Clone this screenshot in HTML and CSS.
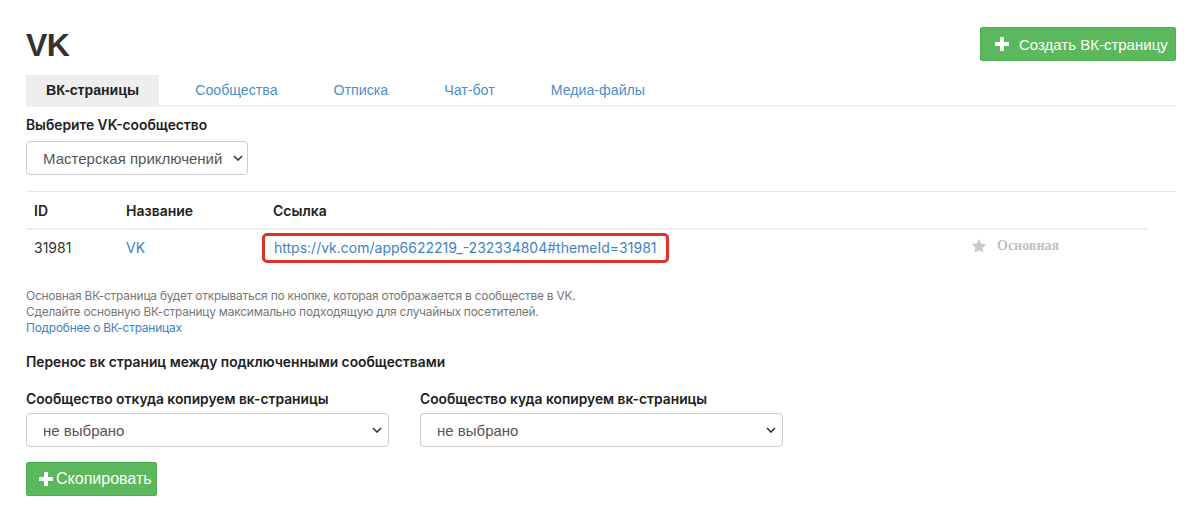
FILE: index.html
```html
<!DOCTYPE html>
<html lang="ru">
<head>
<meta charset="utf-8">
<title>VK</title>
<link rel="stylesheet" href="styles.css">
</head>
<body>
<div class="page">
  <div class="header">
    <h1 class="title">VK</h1>
    <button class="btn btn-green btn-create"><svg class="plus" viewBox="0 0 14 14" width="14" height="14"><path d="M5 0h4v5h5v4H9v5H5V9H0V5h5z" fill="#fff"/></svg>Создать ВК-страницу</button>
  </div>
  <ul class="tabs">
    <li class="tab active">ВК-страницы</li>
    <li class="tab">Сообщества</li>
    <li class="tab">Отписка</li>
    <li class="tab">Чат-бот</li>
    <li class="tab">Медиа-файлы</li>
  </ul>
  <div class="label first-label">Выберите VK-сообщество</div>
  <div class="select small-select"><span>Мастерская приключений</span><svg class="chev" viewBox="0 0 10 6" width="10" height="6"><path d="M1 1l4 4 4-4" fill="none" stroke="#333" stroke-width="1.6"/></svg></div>
  <div class="divider"></div>
  <table class="tbl">
    <thead>
      <tr><th class="c-id">ID</th><th class="c-name">Название</th><th class="c-link">Ссылка</th><th></th></tr>
    </thead>
    <tbody>
      <tr>
        <td>31981</td>
        <td><a class="blue">VK</a></td>
        <td><span class="hl"><a class="blue">https://vk.com/app6622219_-232334804#themeId=31981</a></span></td>
        <td class="c-main"><span class="main"><svg class="star" viewBox="0 0 24 24" width="16" height="16"><path d="M12 1.5l3.2 6.9 7.5.9-5.5 5.2 1.4 7.4L12 18.2l-6.6 3.7 1.4-7.4L1.3 9.3l7.5-.9z" fill="#c8c8c8"/></svg>Основная</span></td>
      </tr>
    </tbody>
  </table>
  <div class="notes">
    <div>Основная ВК-страница будет открываться по кнопке, которая отображается в сообществе в VK.</div>
    <div>Сделайте основную ВК-страницу максимально подходящую для случайных посетителей.</div>
    <div><a class="blue">Подробнее о ВК-страницах</a></div>
  </div>
  <div class="label transfer">Перенос вк страниц между подключенными сообществами</div>
  <div class="row">
    <div class="col">
      <div class="label">Сообщество откуда копируем вк-страницы</div>
      <div class="select"><span>не выбрано</span><svg class="chev" viewBox="0 0 10 6" width="10" height="6"><path d="M1 1l4 4 4-4" fill="none" stroke="#333" stroke-width="1.6"/></svg></div>
    </div>
    <div class="col">
      <div class="label">Сообщество куда копируем вк-страницы</div>
      <div class="select"><span>не выбрано</span><svg class="chev" viewBox="0 0 10 6" width="10" height="6"><path d="M1 1l4 4 4-4" fill="none" stroke="#333" stroke-width="1.6"/></svg></div>
    </div>
  </div>
  <button class="btn btn-green btn-copy"><svg class="plus small" viewBox="0 0 14 14" width="14" height="14"><path d="M5 0h4v5h5v4H9v5H5V9H0V5h5z" fill="#fff"/></svg>Скопировать</button>
</div>
</body>
</html>
```
FILE: styles.css
```css
* { box-sizing: border-box; }
body {
  margin: 0;
  background: #fff;
  font-family: Inter, "Noto Sans", sans-serif;
  color: #333;
}
.page {
  padding: 0 24px 0 26px;
}
.header {
  display: flex;
  justify-content: space-between;
  align-items: flex-start;
  padding-top: 27px;
  height: 75px;
}
.title {
  margin: 0;
  font-family: "Liberation Sans", Arial, sans-serif;
  font-weight: bold;
  font-size: 32px;
  line-height: 36px;
  color: #333;
  letter-spacing: -0.5px;
}
.btn {
  border: 1px solid #4cae4c;
  border-radius: 2px;
  color: #fff;
  font-family: "Liberation Sans", Arial, sans-serif;
  font-size: 15px;
  display: inline-flex;
  align-items: center;
  white-space: nowrap;
  cursor: pointer;
}
.btn-green { background: #5cb85c; }
.btn-create {
  height: 34px;
  padding: 0 12px 0 14px;
  width: 196px;
}
.plus { margin-right: 10px; flex-shrink: 0; }
.plus.small { margin-right: 3px; }
.tabs {
  list-style: none;
  margin: 0;
  padding: 0;
  display: flex;
  border-bottom: 2px solid #f0f0f0;
}
.tab {
  font-family: "Liberation Sans", Arial, sans-serif;
  font-size: 14.2px;
  color: #4a8fcf;
  padding: 0 20px;
  margin-right: 16px;
  height: 30px;
  line-height: 30px;
}
.tab.active {
  background: #eee;
  color: #222;
  font-weight: 600;
}
.label {
  font-size: 13.8px;
  font-weight: 600;
  color: #222;
  line-height: 20px;
}
.first-label {
  margin-top: 8px;
}
.select {
  display: flex;
  align-items: center;
  justify-content: space-between;
  height: 34px;
  border: 1px solid #ccc;
  border-radius: 4px;
  padding: 0 6px 0 16px;
  font-family: "Liberation Sans", Arial, sans-serif;
  font-size: 15px;
  color: #555;
  margin-top: 6px;
}
.small-select {
  width: 222px;
  padding-right: 4px;
}
.divider {
  margin-top: 16px;
  border-top: 1px solid #e8e8e8;
}
.tbl {
  width: 1122px;
  border-collapse: collapse;
  font-size: 14px;
}
.tbl th {
  text-align: left;
  font-weight: 600;
  color: #222;
  padding: 0 8px;
  height: 37px;
  border-bottom: 2px solid #eee;
}
.tbl td {
  padding: 0 8px;
  height: 36px;
}
.c-id { width: 92px; }
.c-name { width: 147px; }
.c-link { width: 698px; }
.blue { color: #3f82c4; text-decoration: none; }
.hl {
  display: inline-block;
  border: 3px solid #e0302a;
  border-radius: 5px;
  padding: 2px 9px 3px 9px;
  margin-left: -11px;
  line-height: 19px;
}
.main {
  display: inline-flex;
  align-items: center;
  font-family: "Liberation Serif", "Times New Roman", serif;
  font-weight: bold;
  font-size: 14px;
  color: #c0c0c0;
}
.star { margin-right: 10px; }
.notes {
  margin-top: 23px;
  font-size: 11.9px;
  line-height: 16px;
  color: #777;
  letter-spacing: -0.2px;
}
.transfer { margin-top: 16px; }
.row {
  display: flex;
  gap: 31px;
  margin-top: 17px;
}
.col {
  width: 363px;
}
.col .select { margin-top: 4px; }
.btn-copy {
  margin-top: 15px;
  height: 34px;
  padding: 0 12px;
  width: 131px;
  font-size: 16px;
}
```
